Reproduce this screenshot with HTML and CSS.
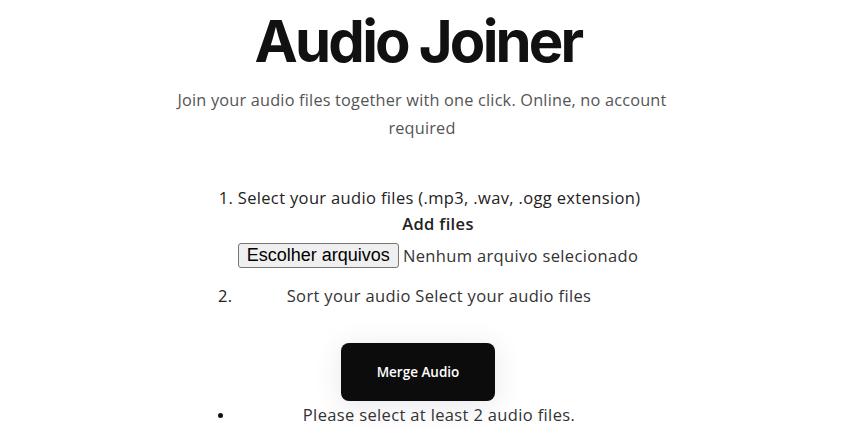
FILE: index.html
```html
<!DOCTYPE html>
<html lang="en">
<head>
<meta charset="utf-8">
<title>Audio Joiner</title>
<link rel="stylesheet" href="styles.css">
</head>
<body>
<main class="page">
  <h1 class="title">Audio Joiner</h1>
  <p class="subtitle">Join your audio files together with one click. Online, no account required</p>
  <div class="steps">
    <div class="step-one">1. Select your audio files (.mp3, .wav, .ogg extension)</div>
    <div class="add-label">Add files</div>
    <div class="file-row">
      <button class="file-btn" type="button">Escolher arquivos</button>
      <span class="file-name">Nenhum arquivo selecionado</span>
    </div>
    <div class="row">
      <span class="marker">2.</span>
      <span class="row-text">Sort your audio Select your audio files</span>
    </div>
  </div>
  <div class="merge-wrap">
    <button class="merge" type="button">Merge Audio</button>
  </div>
  <div class="steps">
    <div class="row">
      <span class="marker bullet"></span>
      <span class="row-text">Please select at least 2 audio files.</span>
    </div>
  </div>
</main>
</body>
</html>
```

FILE: styles.css
```css
html, body {
  margin: 0;
  padding: 0;
  background: #ffffff;
}
body {
  font-family: "Open Sans", "Noto Sans", sans-serif;
  color: #222;
  overflow: hidden;
}
.page {
  display: flex;
  flex-direction: column;
  align-items: center;
}
.title {
  margin: 5px 0 0 0;
  font-family: "Inter", "Noto Sans", sans-serif;
  font-weight: 700;
  font-size: 58px;
  letter-spacing: -2.8px;
  line-height: 72px;
  color: #111;
  padding-right: 14px;
}
.subtitle {
  margin: 9px 0 0 0;
  width: 510px;
  text-align: center;
  font-size: 16.3px;
  letter-spacing: 0.2px;
  line-height: 28px;
  color: #555;
  padding-right: 6px;
}
.steps {
  width: 414px;
  display: flex;
  flex-direction: column;
  align-items: stretch;
  font-size: 16.5px;
  letter-spacing: 0.35px;
  color: #222;
}
.step-one {
  margin-top: 44px;
  text-align: center;
  padding-left: 9px;
  line-height: 24px;
  white-space: nowrap;
  margin-left: -30px;
  margin-right: -30px;
}
.add-label {
  margin-top: 2px;
  padding-left: 26px;
  text-align: center;
  font-weight: 600;
  line-height: 24px;
}
.file-row {
  margin-top: 7px;
  padding-left: 26px;
  display: flex;
  justify-content: center;
  align-items: center;
  gap: 4px;
  white-space: nowrap;
  margin-left: -30px;
  margin-right: -30px;
}
.file-btn {
  font-family: "Liberation Sans", Arial, sans-serif;
  font-size: 18px;
  letter-spacing: 0;
  color: #000;
  background: #efefef;
  border: 1px solid #767676;
  border-radius: 3px;
  padding: 0 8px;
  height: 25px;
}
.file-name {
  color: #333;
}
.row {
  display: flex;
  align-items: center;
  line-height: 24px;
}
.file-row + .row {
  margin-top: 16px;
}
.marker {
  width: 28px;
  flex: none;
}
.bullet {
  display: flex;
  align-items: center;
  height: 24px;
}
.bullet::before {
  content: "";
  width: 5px;
  height: 5px;
  border-radius: 50%;
  background: #111;
}
.row-text {
  flex: 1;
  text-align: center;
  color: #333;
}
.merge-wrap {
  margin-top: 35px;
  margin-right: 14px;
}
.merge {
  width: 154px;
  height: 58px;
  border: none;
  border-radius: 8px;
  background: #0c0c0c;
  color: #fff;
  font-family: "Open Sans", "Noto Sans", sans-serif;
  font-weight: 600;
  font-size: 13.5px;
  box-shadow: 0 4px 28px rgba(60, 60, 110, 0.12);
}
.merge-wrap + .steps {
  margin-top: 2px;
}
```
